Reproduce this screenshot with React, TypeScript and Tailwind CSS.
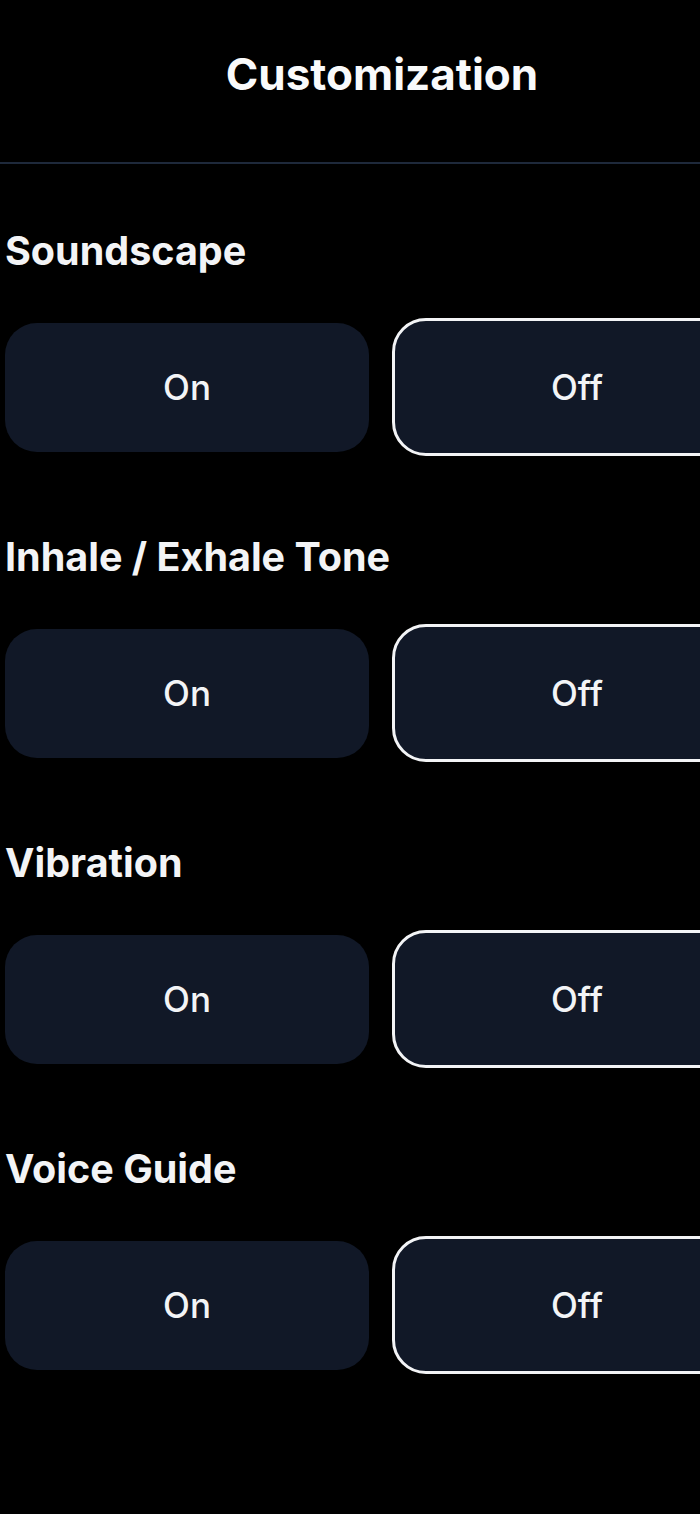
const SETTINGS = ["Soundscape", "Inhale / Exhale Tone", "Vibration", "Voice Guide"];

function Toggle({ label }: { label: string }) {
  return (
    <section className="flex flex-col">
      <h2 className="text-[39.5px] font-bold leading-[40px] text-[#f3f4f6]">{label}</h2>
      <div className="mt-[47px] flex h-[138px] items-center gap-[23px]">
        <button
          type="button"
          className="flex h-[129px] w-[364px] items-center justify-center rounded-[32px] bg-[#111827] text-[35px] font-medium text-[#f3f4f6]"
        >
          On
        </button>
        <button
          type="button"
          className="flex h-[138px] w-[370px] items-center justify-center rounded-[34px] border-[3px] border-[#f3f4f6] bg-[#111827] text-[35px] font-medium text-[#f3f4f6]"
        >
          Off
        </button>
      </div>
    </section>
  );
}

export default function App() {
  return (
    <div className="w-[700px] min-h-[1514px] overflow-hidden bg-black font-['Inter','Noto_Sans',sans-serif]">
      <div className="w-[764px]">
        <header className="flex h-[162px] items-start justify-center pt-[52px]">
          <h1 className="text-[44px] font-bold leading-[44px] text-[#f9fafb]">Customization</h1>
        </header>
        <div className="h-[2px] bg-[#1e293b]" />
        <div className="flex flex-col gap-[81px] pl-[5px] pt-[67px]">
          {SETTINGS.map((s) => (
            <Toggle key={s} label={s} />
          ))}
        </div>
      </div>
    </div>
  );
}
